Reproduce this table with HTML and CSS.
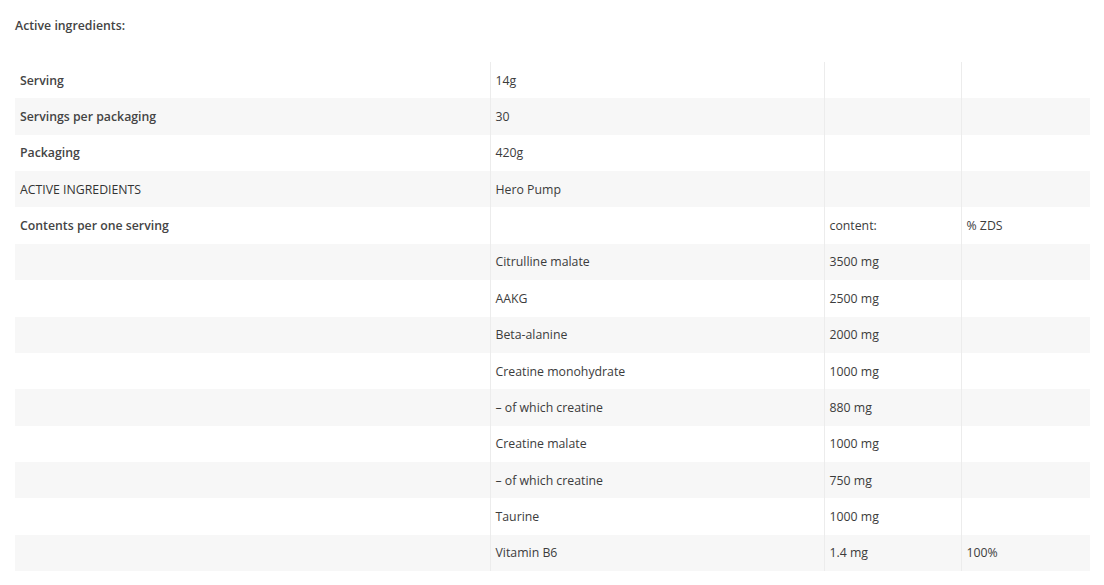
FILE: index.html
```html
<!DOCTYPE html>
<html lang="en">
<head>
<meta charset="utf-8">
<title>Active ingredients</title>
<link rel="stylesheet" href="styles.css">
</head>
<body>
<div class="page">
  <p class="title">Active ingredients:</p>
  <table class="facts">
    <colgroup>
      <col class="c1"><col class="c2"><col class="c3"><col class="c4">
    </colgroup>
    <tbody>
      <tr><td class="label">Serving</td><td>14g</td><td></td><td></td></tr>
      <tr><td class="label">Servings per packaging</td><td>30</td><td></td><td></td></tr>
      <tr><td class="label">Packaging</td><td>420g</td><td></td><td></td></tr>
      <tr><td class="caps">ACTIVE INGREDIENTS</td><td>Hero Pump</td><td></td><td></td></tr>
      <tr><td class="label">Contents per one serving</td><td></td><td>content:</td><td>% ZDS</td></tr>
      <tr><td></td><td>Citrulline malate</td><td>3500 mg</td><td></td></tr>
      <tr><td></td><td>AAKG</td><td>2500 mg</td><td></td></tr>
      <tr><td></td><td>Beta-alanine</td><td>2000 mg</td><td></td></tr>
      <tr><td></td><td>Creatine monohydrate</td><td>1000 mg</td><td></td></tr>
      <tr><td></td><td>– of which creatine</td><td>880 mg</td><td></td></tr>
      <tr><td></td><td>Creatine malate</td><td>1000 mg</td><td></td></tr>
      <tr><td></td><td>– of which creatine</td><td>750 mg</td><td></td></tr>
      <tr><td></td><td>Taurine</td><td>1000 mg</td><td></td></tr>
      <tr><td></td><td>Vitamin B6</td><td>1.4 mg</td><td>100%</td></tr>
    </tbody>
  </table>
</div>
</body>
</html>
```
FILE: styles.css
```css
html, body {
  margin: 0;
  padding: 0;
  background: #ffffff;
}
body {
  font-family: "Open Sans", "Segoe UI", "Noto Sans", sans-serif;
  font-size: 12.3px;
  color: #3c3c3c;
}
.page {
  padding: 17px 14px 0 15px;
}
.title {
  margin: 0 0 27px 0;
  line-height: 18px;
  font-weight: 600;
  color: #444;
}
.facts {
  width: 1075px;
  border-collapse: collapse;
  table-layout: fixed;
}
.c1 { width: 475px; }
.c2 { width: 334px; }
.c3 { width: 137px; }
.c4 { width: 129px; }
.facts td {
  height: 36.36px;
  padding: 1px 6px 0 5px;
  box-sizing: border-box;
  vertical-align: middle;
  border-left: 1px solid #ececec;
  line-height: 18px;
}
.facts td:first-child {
  border-left: none;
}
.facts tr:nth-child(even) td {
  background: #f7f7f7;
}
.facts td.label {
  font-weight: 600;
  color: #444;
}
.facts td.caps {
  color: #333;
}
```
